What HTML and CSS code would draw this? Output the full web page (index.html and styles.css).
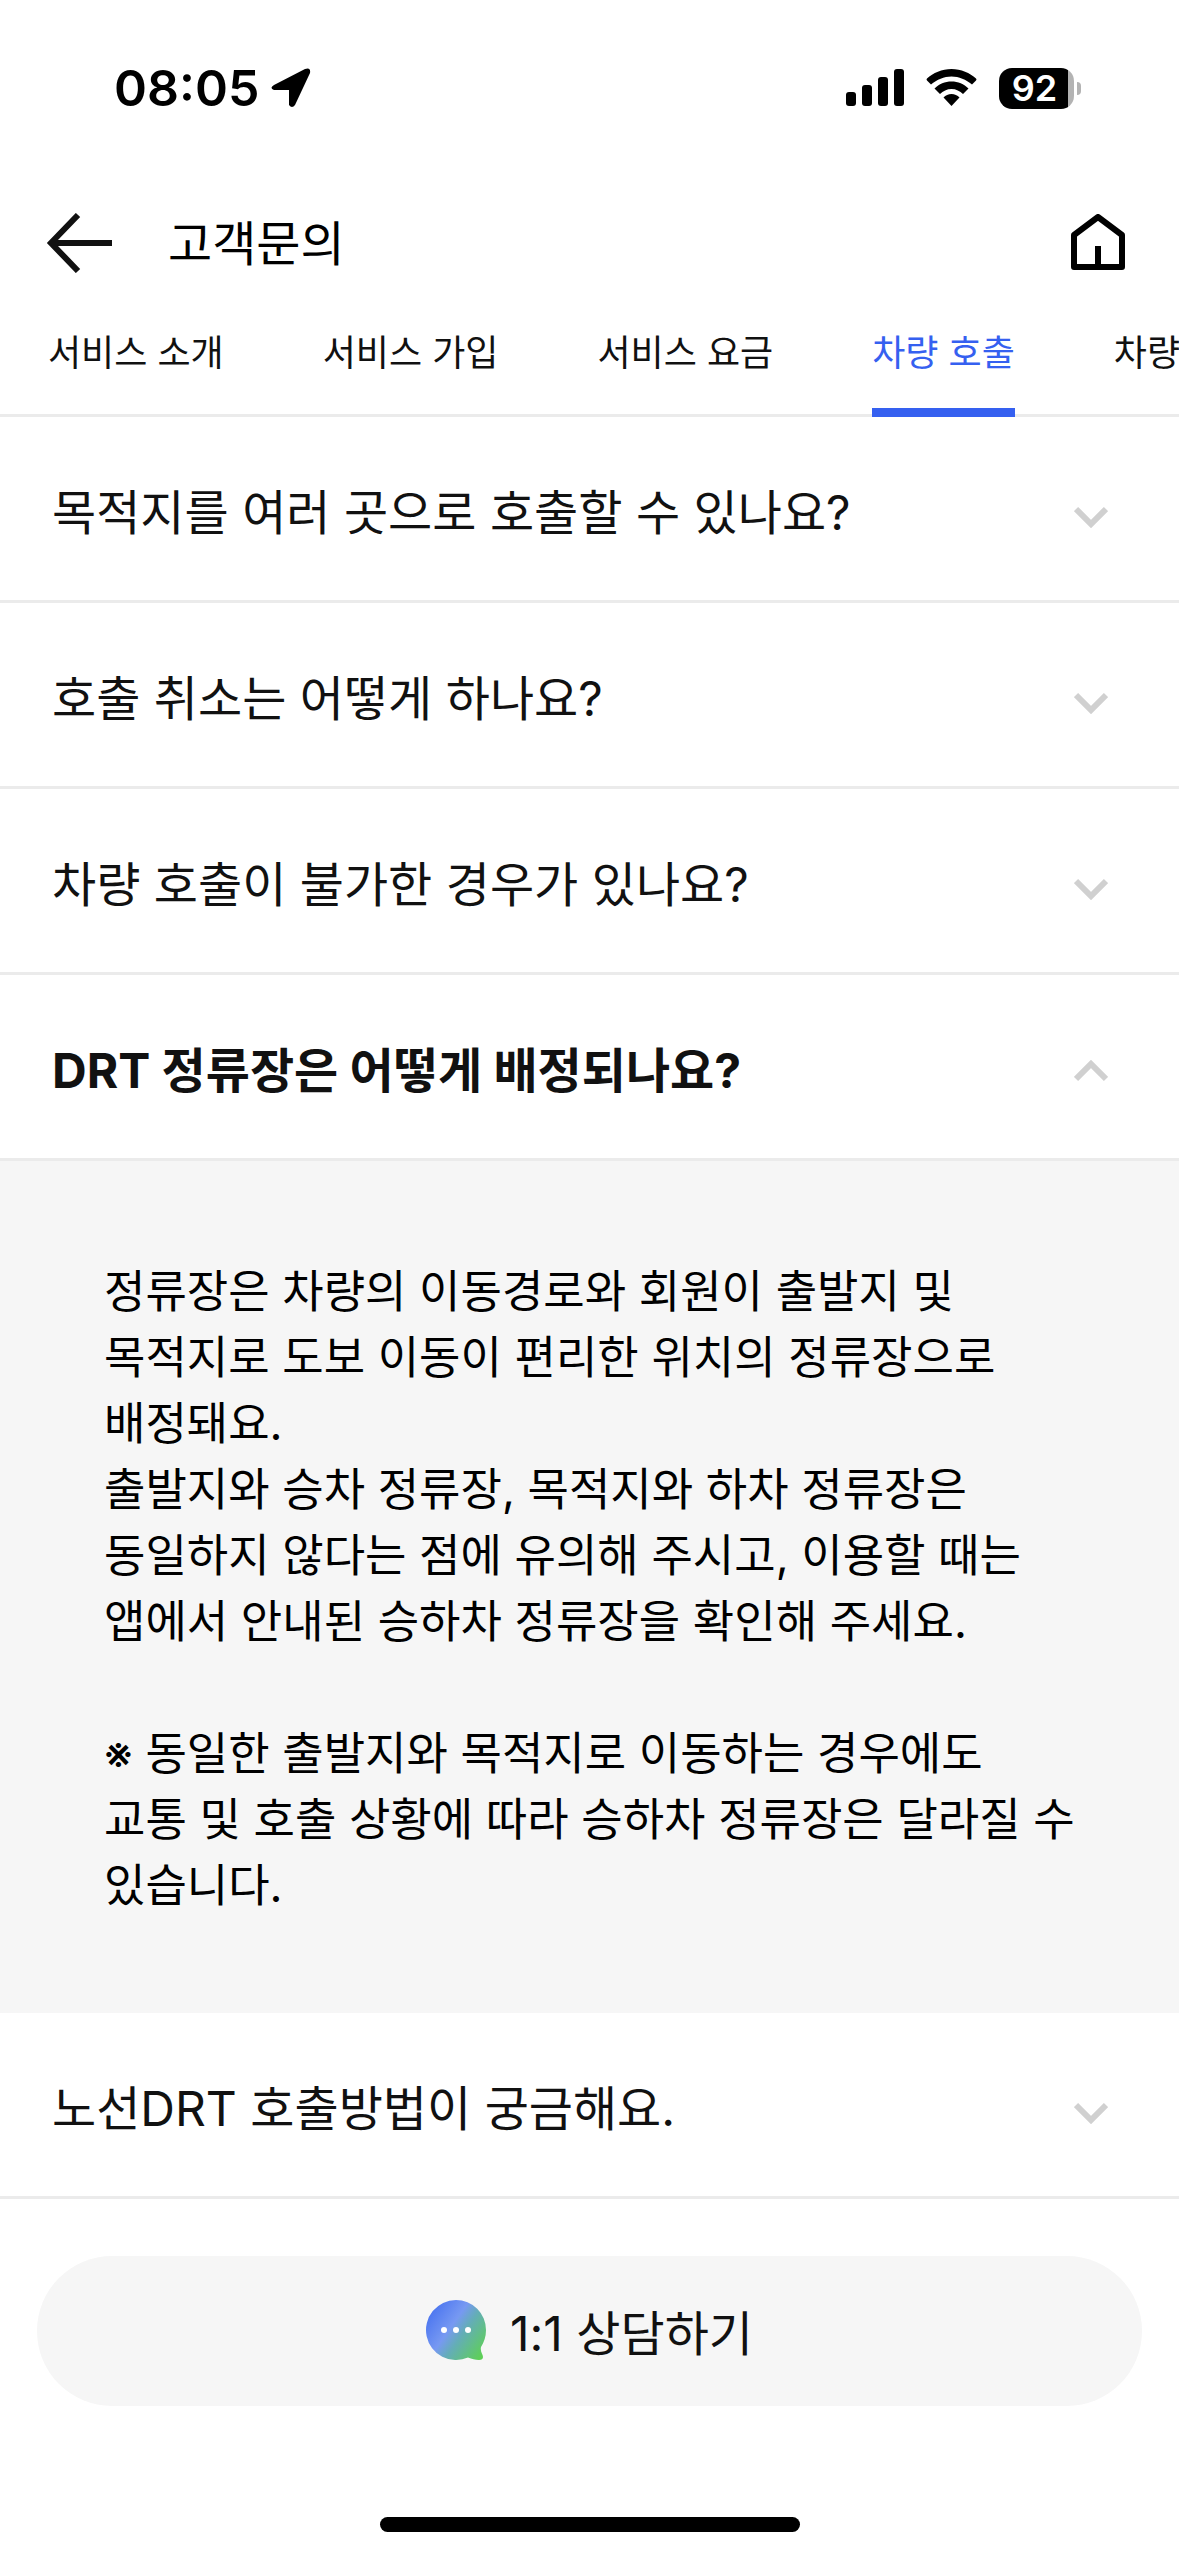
FILE: index.html
```html
<!DOCTYPE html>
<html lang="ko">
<head>
    <meta charset="UTF-8">
    <meta name="viewport" content="width=device-width, initial-scale=1.0">
    <title>고객문의</title>
    <link rel="stylesheet" href="styles.css">
</head>
<body>
    <div class="status-bar">
        <div class="status-left">
            <span class="time">08:05</span>
            <svg class="location-icon" width="40" height="40" viewBox="0 0 40 40">
                <path d="M3 17 L34 1 Q40 -1 39 5 L24 37 Q21 41 18 37 V22 H3 Q-2 20 3 17 Z"/>
            </svg>
        </div>
        <div class="status-right">
            <svg width="58" height="38" viewBox="0 0 58 38">
                <rect x="0" y="23" width="10" height="14" rx="3"/>
                <rect x="16" y="16" width="10" height="21" rx="3"/>
                <rect x="32" y="8" width="10" height="29" rx="3"/>
                <rect x="48" y="0" width="10" height="37" rx="3"/>
            </svg>
            <svg width="51" height="38" viewBox="0 0 51 38">
                <path d="M25.500 0 C35 0 44 4 50 9.500 Q51 10.500 50 11.500 L46 15.500 C40 10.500 33 7.500 25.500 7.500 C18 7.500 11 10.500 5 15.500 L1 11.500 Q0 10.500 1 9.500 C7 4 16 0 25.500 0 Z"/>
                <path d="M25.500 12.500 C32 12.500 38 15 42.500 19.500 L37 25 C34 22 30 20 25.500 20 C21 20 17 22 14 25 L8.500 19.500 C13 15 19 12.500 25.500 12.500 Z"/>
                <path d="M25.500 25 C28.500 25 31.500 26.300 33.500 28.500 L25.500 37 L17.500 28.500 C19.500 26.300 22.500 25 25.500 25 Z"/>
            </svg>
            <div class="battery"><span>92</span></div>
        </div>
    </div>

    <header class="header">
        <button class="icon-button" type="button" aria-label="뒤로">
            <svg width="68" height="60" viewBox="0 0 68 60" fill="none" stroke="#111" stroke-width="6">
                <path d="M32 2 L5 30 L32 58 M5 30 H66"/>
            </svg>
        </button>
        <h1>고객문의</h1>
        <button class="icon-button" type="button" aria-label="홈">
            <svg width="54" height="58" viewBox="0 0 54 58" fill="none" stroke="#000" stroke-width="6" stroke-linejoin="round">
                <path d="M3 21 L27 3 L51 21 V53 H3 Z M27 53 V32"/>
            </svg>
        </button>
    </header>

    <nav class="tabs">
        <a href="#intro">서비스 소개</a>
        <a href="#join">서비스 가입</a>
        <a href="#fee">서비스 요금</a>
        <a href="#call" class="active">차량 호출</a>
        <a href="#ride">차량</a>
    </nav>

    <main class="faq">
        <details>
            <summary>목적지를 여러 곳으로 호출할 수 있나요?
                <svg class="chevron" width="34" height="22" viewBox="0 0 34 22"><path d="M2 3 L17 18 L32 3"/></svg>
            </summary>
        </details>
        <details>
            <summary>호출 취소는 어떻게 하나요?
                <svg class="chevron" width="34" height="22" viewBox="0 0 34 22"><path d="M2 3 L17 18 L32 3"/></svg>
            </summary>
        </details>
        <details>
            <summary>차량 호출이 불가한 경우가 있나요?
                <svg class="chevron" width="34" height="22" viewBox="0 0 34 22"><path d="M2 3 L17 18 L32 3"/></svg>
            </summary>
        </details>
        <details open>
            <summary>DRT 정류장은 어떻게 배정되나요?
                <svg class="chevron" width="34" height="22" viewBox="0 0 34 22"><path d="M2 3 L17 18 L32 3"/></svg>
            </summary>
            <div class="answer">
                <p>정류장은 차량의 이동경로와 회원이 출발지 및 목적지로 도보 이동이 편리한 위치의 정류장으로 배정돼요.</p>
                <p>출발지와 승차 정류장, 목적지와 하차 정류장은 동일하지 않다는 점에 유의해 주시고, 이용할 때는 앱에서 안내된 승하차 정류장을 확인해 주세요.</p>
                <p class="note">※ 동일한 출발지와 목적지로 이동하는 경우에도 교통 및 호출 상황에 따라 승하차 정류장은 달라질 수 있습니다.</p>
            </div>
        </details>
        <details>
            <summary>노선DRT 호출방법이 궁금해요.
                <svg class="chevron" width="34" height="22" viewBox="0 0 34 22"><path d="M2 3 L17 18 L32 3"/></svg>
            </summary>
        </details>
    </main>

    <footer class="footer">
        <button class="chat-button" type="button">
            <svg width="60" height="60" viewBox="0 0 60 60">
                <defs>
                    <linearGradient id="bubble" x1="0" y1="0.15" x2="1" y2="0.85">
                        <stop offset="0.05" stop-color="#4a74f0"/>
                        <stop offset="0.42" stop-color="#7799f2"/>
                        <stop offset="0.6" stop-color="#64adb8"/>
                        <stop offset="1" stop-color="#5ed055"/>
                    </linearGradient>
                </defs>
                <path fill="url(#bubble)" d="M30 0 A30 30 0 0 1 60 30 C60 37 58 42 55 47 C54 52 57 54 57 57 Q57 60 53 60 C49 60 46 59 42 57.500 A30 30 0 1 1 30 0 Z"/>
                <circle cx="18" cy="30" r="3" fill="#fff"/>
                <circle cx="30" cy="30" r="3" fill="#fff"/>
                <circle cx="42" cy="30" r="3" fill="#fff"/>
            </svg>
            1:1 상담하기
        </button>
        <div class="home-indicator"></div>
    </footer>
</body>
</html>
```
FILE: styles.css
```css
* {
    box-sizing: border-box;
}

body {
    margin: 0;
    min-height: 100vh;
    display: flex;
    flex-direction: column;
    overflow-x: hidden;
    font-family: Inter, "Noto Sans CJK KR", sans-serif;
    color: #111;
    background: #fff;
}

button {
    font-family: inherit;
    color: inherit;
    border: none;
    cursor: pointer;
}

svg {
    display: block;
    flex: none;
}

/* Status bar */
.status-bar {
    height: 176px;
    padding: 0 105px 0 114px;
    display: flex;
    align-items: center;
    justify-content: space-between;
    color: #000;
}

.status-left,
.status-right {
    display: flex;
    align-items: center;
}

.status-left {
    gap: 12px;
}

.status-right {
    gap: 22px;
}

.time {
    font-size: 50px;
    line-height: 60px;
    font-weight: 600;
}

.battery {
    position: relative;
    width: 75px;
    height: 41px;
    padding-right: 4px;
    border-radius: 13px;
    background: linear-gradient(to right, #000 92%, #b3b3b3 92%);
    color: #fff;
    font-size: 36px;
    line-height: 41px;
    font-weight: 600;
    text-align: center;
}

.battery::after {
    content: "";
    position: absolute;
    top: 14px;
    right: -7px;
    width: 4px;
    height: 13px;
    border-radius: 0 4px 4px 0;
    background: #b3b3b3;
}

/* Header */
.header {
    height: 134px;
    padding: 0 54px 0 46px;
    display: flex;
    align-items: center;
}

.header h1 {
    flex: 1;
    margin: 2px 0 0 54px;
    font-size: 48px;
    line-height: 72px;
    font-weight: 400;
    color: #000;
}

.icon-button {
    padding: 0;
    background: none;
}

/* Tabs */
.tabs {
    display: flex;
    gap: 99px;
    padding: 0 48px;
    overflow: hidden;
    box-shadow: inset 0 -3px #ebebeb;
}

.tabs a {
    flex: none;
    padding: 15px 0 27px;
    border-bottom: 9px solid transparent;
    font-size: 36px;
    line-height: 56px;
    color: #111;
    text-decoration: none;
}

.tabs a.active {
    color: #3560f0;
    border-color: #3560f0;
}

/* FAQ list */
.faq summary {
    display: flex;
    align-items: center;
    justify-content: space-between;
    padding: 64px 71px 56px 52px;
    border-bottom: 3px solid #ebebeb;
    font-size: 48px;
    line-height: 63px;
    list-style: none;
    cursor: pointer;
}

.faq details[open] summary {
    font-weight: 700;
}

.chevron {
    margin-top: 8px;
    fill: none;
    stroke: #d0d0d0;
    stroke-width: 6;
}

.faq details[open] .chevron {
    margin: 0;
    transform: rotate(180deg);
}

.answer {
    padding: 98px 104px 94px;
    background: #f6f6f6;
    color: #000;
    font-size: 45px;
    line-height: 66px;
    word-break: keep-all;
}

.answer p {
    margin: 0;
}

.answer .note {
    margin-top: 66px;
}

/* Footer */
.footer {
    padding: 57px 37px 24px;
}

.chat-button {
    width: 100%;
    height: 150px;
    padding: 0 0 2px;
    display: flex;
    align-items: center;
    justify-content: center;
    gap: 24px;
    border-radius: 75px;
    background: #f6f6f6;
    font-size: 48px;
}

.home-indicator {
    width: 420px;
    height: 15px;
    margin: 111px auto 0;
    border-radius: 8px;
    background: #000;
}
```
